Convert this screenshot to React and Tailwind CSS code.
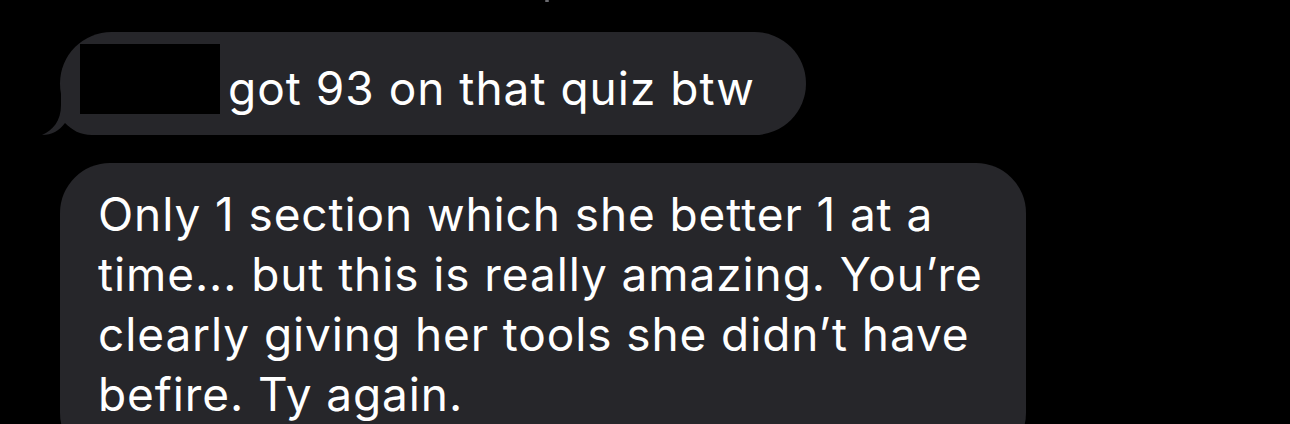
import React from 'react';

const lines = [
  'Only 1 section which she better 1 at a',
  'time... but this is really amazing. You’re',
  'clearly giving her tools she didn’t have',
  'befire. Ty again.',
];

function Tail() {
  return (
    <svg
      className="absolute left-[-20px] top-[53px]"
      width="72"
      height="50"
      viewBox="0 0 72 50"
      fill="#26262a"
    >
      <path d="M21 0 L21 20 C21 36 13 45 2 50 C12 50 19 46 25 38 C32 45 40 50 52 50 L72 50 L72 0 Z" />
    </svg>
  );
}

export default function App() {
  return (
    <div
      className="h-[424px] w-[1290px] overflow-hidden bg-black"
      style={{ fontFamily: 'Inter, "Noto Sans", sans-serif' }}
    >
      <div className="flex pl-[545px]">
        <div className="h-[2px] w-[4px] rounded-full bg-[#6b6b70]" />
      </div>
      <div className="flex flex-col items-start pl-[60px] pt-[30px]">
        <div className="relative flex h-[103px] w-[746px] items-start rounded-full bg-[#26262a] pl-[20px]">
          <Tail />
          <div className="relative mt-[12px] h-[70px] w-[140px] bg-black" />
          <span className="relative ml-[8px] mt-[26px] text-[46px] leading-[60px] tracking-[1px] text-white whitespace-nowrap">
            got 93 on that quiz btw
          </span>
        </div>
        <div className="mt-[28px] h-[300px] w-[966px] rounded-[50px] bg-[#26262a] pl-[38px] pt-[21px]">
          {lines.map((line) => (
            <div key={line} className="h-[60px] text-[46px] leading-[60px] tracking-[0.9px] text-white whitespace-nowrap">
              {line}
            </div>
          ))}
        </div>
      </div>
    </div>
  );
}
